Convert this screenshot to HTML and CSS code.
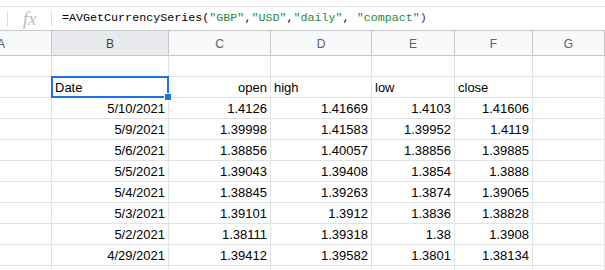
FILE: index.html
```html
<!DOCTYPE html>
<html>
<head>
<meta charset="utf-8">
<link rel="stylesheet" href="styles.css">
</head>
<body>
<div class="sheet">
  <div class="fbar">
    <div class="fb-left"></div>
    <div class="fb-fx">fx</div>
    <div class="fb-text">=AVGetCurrencySeries(<span class="str">"GBP"</span>,<span class="str">"USD"</span>,<span class="str">"daily"</span>, <span class="str">"compact"</span><span class="paren">)</span></div>
  </div>
  <div class="grid">
    <div class="hd first">A</div><div class="hd sel">B</div><div class="hd">C</div><div class="hd">D</div><div class="hd">E</div><div class="hd">F</div><div class="hd">G</div>

    <div class="c"></div><div class="c"></div><div class="c"></div><div class="c"></div><div class="c"></div><div class="c"></div><div class="c"></div>

    <div class="c"></div><div class="c l active">Date</div><div class="c">open</div><div class="c l">high</div><div class="c l">low</div><div class="c l">close</div><div class="c"></div>

    <div class="c"></div><div class="c">5/10/2021</div><div class="c">1.4126</div><div class="c">1.41669</div><div class="c">1.4103</div><div class="c">1.41606</div><div class="c"></div>
    <div class="c"></div><div class="c">5/9/2021</div><div class="c">1.39998</div><div class="c">1.41583</div><div class="c">1.39952</div><div class="c">1.4119</div><div class="c"></div>
    <div class="c"></div><div class="c">5/6/2021</div><div class="c">1.38856</div><div class="c">1.40057</div><div class="c">1.38856</div><div class="c">1.39885</div><div class="c"></div>
    <div class="c"></div><div class="c">5/5/2021</div><div class="c">1.39043</div><div class="c">1.39408</div><div class="c">1.3854</div><div class="c">1.3888</div><div class="c"></div>
    <div class="c"></div><div class="c">5/4/2021</div><div class="c">1.38845</div><div class="c">1.39263</div><div class="c">1.3874</div><div class="c">1.39065</div><div class="c"></div>
    <div class="c"></div><div class="c">5/3/2021</div><div class="c">1.39101</div><div class="c">1.3912</div><div class="c">1.3836</div><div class="c">1.38828</div><div class="c"></div>
    <div class="c"></div><div class="c">5/2/2021</div><div class="c">1.38111</div><div class="c">1.39318</div><div class="c">1.38</div><div class="c">1.3908</div><div class="c"></div>
    <div class="c"></div><div class="c">4/29/2021</div><div class="c">1.39412</div><div class="c">1.39582</div><div class="c">1.3801</div><div class="c">1.38134</div><div class="c"></div>

    <div class="c"></div><div class="c"></div><div class="c"></div><div class="c"></div><div class="c"></div><div class="c"></div><div class="c"></div>
  </div>
</div>
</body>
</html>
```

FILE: styles.css
```css
html, body {
  margin: 0;
  padding: 0;
  background: #fff;
  overflow: hidden;
}
body {
  width: 605px;
  height: 270px;
  font-family: "Liberation Sans", Arial, sans-serif;
}
.sheet {
  padding-top: 6px;
  width: 605px;
  height: 264px;
  overflow: hidden;
}
.fbar {
  display: flex;
  border-top: 1px solid #e0e0e0;
  border-bottom: 1px solid #c4c7c5;
  box-sizing: border-box;
  height: 25px;
}
.fb-left {
  width: 7px;
  border-right: 1px solid #dadce0;
  margin: 4px 0;
}
.fb-fx {
  width: 43px;
  border-right: 1px solid #dadce0;
  margin: 4px 0;
  font-family: "Liberation Serif", "DejaVu Serif", serif;
  font-style: italic;
  font-size: 19px;
  color: #c0c0c0;
  display: flex;
  align-items: center;
  justify-content: center;
  line-height: 15px;
}
.fb-text {
  padding-left: 10px;
  font-family: "Liberation Mono", "DejaVu Sans Mono", monospace;
  font-size: 11.7px;
  color: #000;
  line-height: 23px;
  white-space: pre;
}
.str { color: #1b8a3c; }
.paren { color: #3c2b8f; }

.grid {
  display: grid;
  grid-template-columns: 52px 117px 102px 101px 83px 78px 72px;
  grid-template-rows: 25px;
  grid-auto-rows: 21px;
}
.hd {
  background: #f8f9fa;
  border-right: 1px solid #c4c7c5;
  border-bottom: 1px solid #c4c7c5;
  color: #5f6368;
  font-size: 12px;
  display: flex;
  align-items: center;
  justify-content: center;
  padding-top: 1px;
}
.hd.first {
  justify-content: flex-start;
  padding-left: 0;
  text-indent: -3px;
}
.hd.sel {
  background: #e8eaed;
  color: #3c4043;
}
.c {
  border-right: 1px solid #e2e3e3;
  border-bottom: 1px solid #e2e3e3;
  font-size: 13px;
  line-height: 15px;
  color: #000;
  display: flex;
  align-items: flex-end;
  justify-content: flex-end;
  padding: 0 3px 2px 3px;
  white-space: nowrap;
}
.c.l {
  justify-content: flex-start;
}
.active {
  position: relative;
}
.active::after {
  content: "";
  position: absolute;
  left: -1px;
  top: -1px;
  right: -1px;
  bottom: -1px;
  border: 2px solid #1a73e8;
  pointer-events: none;
}
.active::before {
  content: "";
  position: absolute;
  right: -4px;
  bottom: -4px;
  width: 6px;
  height: 6px;
  background: #1a73e8;
  border: 1px solid #fff;
  z-index: 2;
}
```
